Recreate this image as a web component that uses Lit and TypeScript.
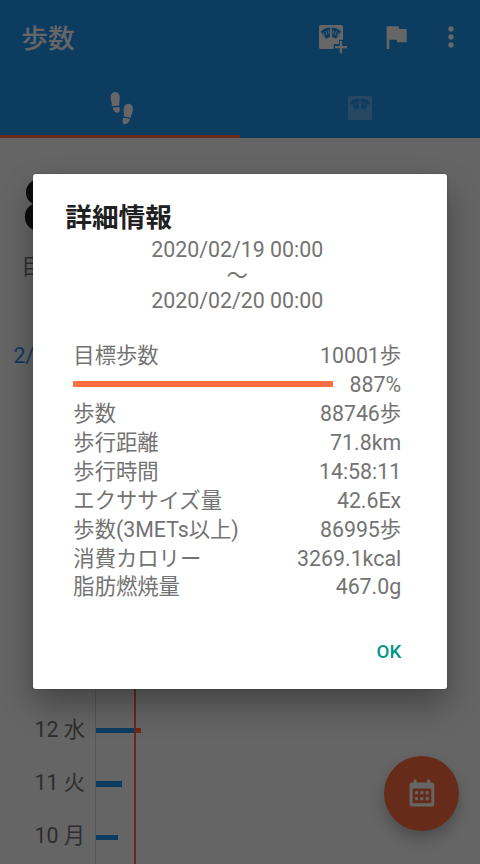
import { LitElement, html, svg, css } from 'lit';
import { customElement, property } from 'lit/decorators.js';

interface Detail {
	label: string;
	value: string;
}

interface Day {
	label: string;
	steps: number;
	over?: number;
}

const DETAILS: Detail[] = [
	{ label: '歩数', value: '88746歩' },
	{ label: '歩行距離', value: '71.8km' },
	{ label: '歩行時間', value: '14:58:11' },
	{ label: 'エクササイズ量', value: '42.6Ex' },
	{ label: '歩数(3METs以上)', value: '86995歩' },
	{ label: '消費カロリー', value: '3269.1kcal' },
	{ label: '脂肪燃焼量', value: '467.0g' },
];

const DAYS: Day[] = [
	{ label: '', steps: 30 },
	{ label: '12 水', steps: 38.3, over: 7 },
	{ label: '11 火', steps: 26 },
	{ label: '10 月', steps: 22.3 },
];

const dial = svg`
	<path fill="#2196f3" d="M4.3 8C6 6 8.5 5 11.5 4.9V12C10.3 12.2 9.2 12.7 8.3 13.4ZM19.7 8C18 6 15.5 5 12.5 4.9V12C13.7 12.2 14.8 12.7 15.7 13.4Z"/>
	<path fill="none" stroke="currentColor" stroke-width=".65" d="M5.9 8.6L7.6 11.2M7.9 7.5L9 10.2M10 6.9L10.5 9.6M18.1 8.6L16.4 11.2M16.1 7.5L15 10.2M14 6.9L13.5 9.6"/>
	<path d="M11.4 6H12.6V13H11.4Z"/>`;

const ICONS = {
	scale: svg`<rect x="3" y="3" width="18" height="18" rx="1.3"/>${dial}`,
	scaleAdd: svg`
		<path d="M4.3 3H19.7Q21 3 21 4.3V14H18V17.2H14V21H4.3Q3 21 3 19.7V4.3Q3 3 4.3 3Z"/>
		${dial}
		<path d="M18.6 15H20.3V18.7H24V20.4H20.3V24.2H18.6V20.4H15V18.7H18.6Z"/>`,
	flag: svg`<path d="M14.4 6L14 4H5v17h2v-7h5.6l.4 2h7V6z"/>`,
	more: svg`<circle cx="12" cy="6" r="2"/><circle cx="12" cy="12" r="2"/><circle cx="12" cy="18" r="2"/>`,
	steps: svg`
		<path d="M5.9 10.6C6 8 5.1 6.6 5 4.2C4.9 1.6 6.5 0 8.5 0C10.5 0 11.8 1.5 11.8 4C11.8 6.4 11.3 8 11.5 10.2Z"/>
		<path d="M6.5 11.7L11.6 11.2C12 13.8 11.8 15.3 10.2 15.5C8.3 15.7 7 14 6.5 11.7Z"/>
		<path d="M14.9 18.3C15.1 16.2 14.5 14.5 14.8 12.3C15.1 10 16.6 8.7 18.5 8.8C20.6 8.9 21.9 10.7 21.7 13.2C21.5 15.5 20.4 16.8 20.2 19.1Z"/>
		<path d="M14.4 19.3L19.6 20.1C18.8 22.5 17.6 24.3 15.6 24.2C13.8 24 13.6 22 14.4 19.3Z"/>`,
	calendar: svg`<path fill-rule="evenodd" d="M5.8 1.1H7.9V3.3H16V1.1H18.1V3.3H19.2Q21.2 3.3 21.2 5.3V19.3Q21.2 21.3 19.2 21.3H4.7Q2.7 21.3 2.7 19.3V5.3Q2.7 3.3 4.7 3.3H5.8ZM4.9 7.8V18.9H19V7.8ZM6.8 10H9V12.2H6.8ZM10.8 10H13V12.2H10.8ZM14.8 10H17V12.2H14.8ZM6.8 14.5H9V16.7H6.8ZM10.8 14.5H13V16.7H10.8ZM14.8 14.5H17V16.7H14.8Z"/>`,
};

@customElement('app-icon')
export class AppIcon extends LitElement {
	static styles = css`
		:host {
			display: block;
			width: 32px;
			height: 32px;
		}

		svg {
			display: block;
			width: 100%;
			height: 100%;
			overflow: visible;
			fill: currentColor;
		}
	`;

	@property() name: keyof typeof ICONS = 'more';

	render() {
		return html`<svg viewBox="0 0 24 24">${ICONS[this.name]}</svg>`;
	}
}

@customElement('step-chart')
export class StepChart extends LitElement {
	static styles = css`
		:host {
			display: block;
		}

		.row {
			display: grid;
			grid-template-columns: 85px 10px 39px 2px 1fr;
			height: 53.33px;
		}

		.label {
			align-self: center;
			text-align: right;
			line-height: 29px;
			margin-top: -3px;
		}

		.axis {
			grid-column: 3;
			display: flex;
			align-items: center;
			border-left: 1px solid #d6d6d6;
		}

		.bar {
			flex: none;
			height: 5.4px;
			background: #2196f3;
		}

		.over {
			background: #ff6e40;
		}

		.goal {
			background: #ff6e40;
			width: 1.6px;
		}
	`;

	render() {
		return DAYS.map(
			(day) => html`<div class="row">
				<span class="label">${day.label}</span>
				<div class="axis">
					<div class="bar" style="width:${day.steps}px"></div>
					${day.over ? html`<div class="bar over" style="width:${day.over}px"></div>` : ''}
				</div>
				<div class="goal"></div>
			</div>`
		);
	}
}

@customElement('detail-dialog')
export class DetailDialog extends LitElement {
	static styles = css`
		:host {
			display: flex;
			flex-direction: column;
			box-sizing: border-box;
			width: 413.4px;
			height: 514.8px;
			margin-bottom: 1px;
			padding: 26px 45.5px 21.5px 40px;
			background: #fff;
			border-radius: 2.67px;
			box-shadow: 0 0 2px rgba(0, 0, 0, 0.3), 0 16px 32px rgba(0, 0, 0, 0.32);
			color: #737373;
		}

		.title {
			margin: 0 0 0 -8px;
			font-size: 26.67px;
			line-height: 37px;
			font-weight: 700;
			color: #212121;
		}

		.period {
			display: flex;
			flex-direction: column;
			align-items: center;
			margin-bottom: 29px;
			line-height: 25.4px;
		}

		.row {
			display: flex;
			align-items: center;
			justify-content: space-between;
			line-height: 28.9px;
			height: 28.9px;
			white-space: nowrap;
		}

		.progress {
			width: 260px;
			height: 5.33px;
			margin-bottom: 3px;
			background: #ff6e40;
		}

		.ok {
			align-self: flex-end;
			margin-top: auto;
			padding: 0;
			border: 0;
			background: none;
			font: 500 18.67px/30px Roboto, sans-serif;
			color: #009688;
		}
	`;

	render() {
		return html`
			<h1 class="title">詳細情報</h1>
			<div class="period">
				<span>2020/02/19 00:00</span>
				<span>〜</span>
				<span>2020/02/20 00:00</span>
			</div>
			<div class="row"><span>目標歩数</span><span>10001歩</span></div>
			<div class="row"><div class="progress"></div><span>887%</span></div>
			${DETAILS.map((d) => html`<div class="row"><span>${d.label}</span><span>${d.value}</span></div>`)}
			<button class="ok">OK</button>
		`;
	}
}

@customElement('app-root')
export class AppRoot extends LitElement {
	static styles = css`
		:host {
			display: block;
			position: relative;
			width: 480px;
			height: 864px;
			overflow: hidden;
			background: #fdfdfd;
			font: 21.33px Roboto, 'Noto Sans CJK JP', sans-serif;
			color: #737373;
		}

		.page {
			display: flex;
			flex-direction: column;
			height: 864px;
		}

		.header {
			flex: none;
			height: 138.4px;
			background: #2196f3;
			color: #fff;
		}

		.toolbar {
			display: flex;
			align-items: center;
			height: 74.4px;
			padding: 0 13.5px 0 21.3px;
		}

		.name {
			flex: 1;
			margin-top: 3px;
			font-size: 26.67px;
			line-height: 36px;
			font-weight: 500;
		}

		.actions {
			display: flex;
			gap: 33px;
		}

		.actions app-icon:last-child {
			margin-left: -10px;
		}

		.tabs {
			display: grid;
			grid-template-columns: 1fr 1fr;
			height: 64px;
		}

		.tab {
			display: flex;
			align-items: center;
			justify-content: center;
			border-bottom: 3px solid transparent;
		}

		.tab app-icon {
			margin-bottom: -7px;
		}

		.tab.active {
			border-color: #ff6e40;
		}

		.tab.inactive app-icon {
			opacity: 0.3;
		}

		.summary {
			flex: 1;
			min-height: 0;
			overflow: hidden;
			padding: 31px 0 0 21.5px;
		}

		.total {
			font-size: 72px;
			line-height: 76px;
			font-weight: 700;
			color: #212121;
		}

		.target {
			line-height: 29px;
			margin-top: 7px;
		}

		.date {
			margin: 60px 0 0 -8px;
			line-height: 29px;
			color: #2196f3;
		}

		step-chart {
			flex: none;
			height: 213.33px;
		}

		.fab {
			position: absolute;
			right: 21px;
			bottom: 33px;
			display: grid;
			place-items: center;
			width: 75px;
			height: 75px;
			border-radius: 50%;
			background: #ff6e40;
			color: #fff;
			box-shadow: 0 8px 16px rgba(0, 0, 0, 0.25);
		}

		.scrim {
			position: absolute;
			inset: 0;
			display: grid;
			place-items: center;
			background: rgba(0, 0, 0, 0.6);
		}
	`;

	render() {
		return html`
			<div class="page">
				<header class="header">
					<div class="toolbar">
						<span class="name">歩数</span>
						<div class="actions">
							<app-icon name="scaleAdd"></app-icon>
							<app-icon name="flag"></app-icon>
							<app-icon name="more"></app-icon>
						</div>
					</div>
					<nav class="tabs">
						<div class="tab active"><app-icon name="steps"></app-icon></div>
						<div class="tab inactive"><app-icon name="scale"></app-icon></div>
					</nav>
				</header>
				<section class="summary">
					<div class="total">8</div>
					<div class="target">目</div>
					<div class="date">2/</div>
				</section>
				<step-chart></step-chart>
			</div>
			<div class="fab"><app-icon name="calendar"></app-icon></div>
			<div class="scrim"><detail-dialog></detail-dialog></div>
		`;
	}
}
